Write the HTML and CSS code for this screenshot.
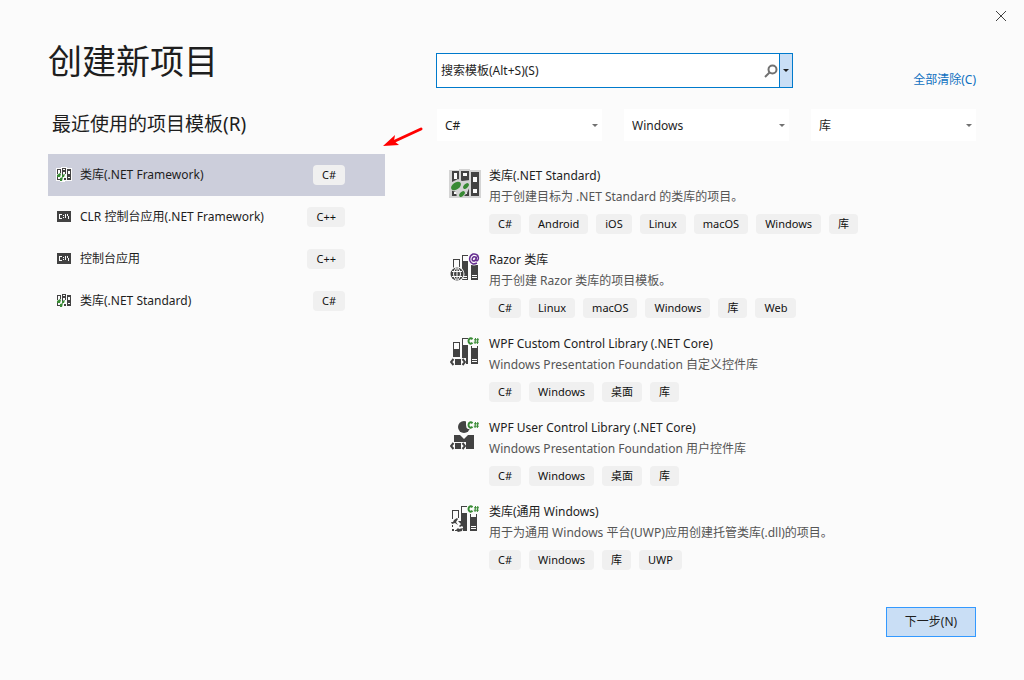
FILE: index.html
```html
<!DOCTYPE html>
<html lang="zh-CN">
<head>
<meta charset="utf-8">
<meta name="viewport" content="width=device-width, initial-scale=1">
<title>创建新项目</title>
<link rel="stylesheet" href="styles.css">
</head>
<body>
<svg class="sprites" aria-hidden="true">
  <symbol id="lib-small" viewBox="0 0 16 16">
    <path class="halo" d="M0 1h5V0h6v1h5v13H9v1H4v-1H0z"/>
    <path class="ink" d="M1 2h4v4H4V3H2v4H1zM1 10h1v2h2v1H1zM6 1h4v6H9V5H7v3H6zM11 2h4v11h-4zM8 11h2v2H8z"/>
    <path class="halo" d="M7 2h2v1H7zM12 4h2v3h-2zM12 10h2v1h-2z"/>
    <path class="green" d="M1 8l3-2 1 1-1 3H1zM6 8l3-1-1 3H6zM4 11l3-1-1 4H4z"/>
  </symbol>
  <symbol id="console" viewBox="0 0 16 16">
    <path class="ink" d="M1 2h14v11H1z"/>
    <path class="halo" d="M3 5h3v1H4v3h2v1H3zM7 6h1v1H7zM7 8h1v1H7zM9 5h1v4H9zM11 5h1v2h-1zM12 7h1v3h-1z"/>
  </symbol>
  <symbol id="lib" viewBox="0 1 32 32">
    <path class="rim" d="M0 2h10V1h11v1h11v28H0z"/>
    <path class="ink" d="M3 3h7v25H3zM12 3h8v25h-8zM22 4h8v24h-8z"/>
    <path class="halo" d="M5 5h3v6H5zM14 5h4v3h-4zM24 9h4v5h-4zM24 21h4v4h-4zM5 24h3v2H5zM15 24h3v2h-3z"/>
    <path class="rim" d="M1 15l8-4 4 2 8-1v6l-3 7-4 4-6 1-1-6-6-2z"/>
    <ellipse class="green" cx="7" cy="18" rx="5.500" ry="3.500" transform="rotate(-35 7 18)"/>
    <ellipse class="green" cx="17" cy="18" rx="3.500" ry="2" transform="rotate(-45 17 18)"/>
    <ellipse class="green" cx="13" cy="26" rx="3.500" ry="2" transform="rotate(-45 13 26)"/>
  </symbol>
  <symbol id="csharp" viewBox="0 0 12 8">
    <path class="line-green" d="M5.500 2.200C4 .7 1.500 1.200 1.500 4s2.500 3.300 4 1.800"/>
    <path class="hash" d="M8.500 1L8 7M10.800 1L10.300 7M7 2.800h5M6.800 5.200h5"/>
  </symbol>
  <symbol id="markup" viewBox="0 0 16 8">
    <path class="halo" d="M0 0h16v8H0z"/>
    <path class="line-ink" d="M3.500 1L1 4l2.500 3M12.500 1L15 4l-2.500 3"/>
    <path class="ink" d="M5 1h6v6H5z"/>
  </symbol>
  <symbol id="razor" viewBox="0 0 32 32">
    <path class="ink" fill-rule="evenodd" d="M4 6h7v9H4zM5 7v7h5V7zM13 2h6v1h-5v5h5v19h-6zM22 12h7v15h-7zM14 23h4v1h-4zM14 25h4v1h-4zM23 22h5v1h-5zM23 25h5v-1h-5z"/>
    <circle class="halo" cx="8" cy="21" r="7.500"/>
    <circle class="ink" cx="8" cy="21" r="6.500"/>
    <path class="line-light" d="M3 18.500h10M3 23.500h10M8 15v12M7 15q-5 6 0 12M9 15q5 6 0 12"/>
    <circle class="halo" cx="25" cy="6" r="6.500"/>
    <path class="line-purple" d="M28 10Q23 12.500 21 8Q19.500 3 24 1Q29 .5 29.500 5Q29 8.500 27 7.500L27.500 3.500M27 5.500Q26.500 8 24.500 8Q22.500 7.500 23.500 5Q25 3 27 4.500"/>
  </symbol>
  <symbol id="wpf-custom" viewBox="0 0 32 32">
    <path class="ink" fill-rule="evenodd" d="M4 5h7v15H4zM5 6v6h5V6zM13 1h6v1h-5v6h5v19h-6zM22 9h7v18h-7zM23 9h5v2h-5zM23 22h5v1h-5zM23 25h5v-1h-5z"/>
    <use href="#markup" x="1" y="21" width="16" height="8"/>
    <use href="#csharp" x="18" y="0" width="12" height="8"/>
  </symbol>
  <symbol id="wpf-user" viewBox="0 0 32 32">
    <circle class="ink" cx="15" cy="6" r="6"/>
    <path class="ink" d="M5 14h6l4 4 4-4h6v14H5z"/>
    <path class="halo" d="M17 0h13v8h-11q-2-1-2-4z"/>
    <use href="#markup" x="1" y="21" width="16" height="8"/>
    <use href="#csharp" x="18" y="0" width="12" height="8"/>
  </symbol>
  <symbol id="uwp" viewBox="0 0 32 32">
    <path class="ink" fill-rule="evenodd" d="M3 5h7v8H9V6H4v8H3zM12 1h6v1h-5v6h5v18h-4v-8h-2zM21 9h7v17h-7zM22 9h5v3h-5zM22 21h5v1h-5zM22 24h5v-1h-5z"/>
    <path class="ink" d="M5 15l3-2 1 1-2 3 2 3-3-2-3 1-1-2h2zM3 20h1v2H3zM3 24h2v2H3zM6 25h4v1H6zM9 16h3l3 3v4l-2-2-2 1-1-1 2-2zM14 23l-1 3-4 1-2-2 2-2 1 1z"/>
    <use href="#csharp" x="18" y="0" width="12" height="8"/>
  </symbol>
</svg>

<div class="dialog">
  <div class="titlebar">
    <button class="close" type="button" aria-label="关闭"><svg width="12" height="12" viewBox="0 0 12 12"><path d="M1 1l10 10M11 1L1 11"/></svg></button>
  </div>
  <main class="content">
    <section class="recent">
      <h1>创建新项目</h1>
      <h2>最近使用的项目模板(R)</h2>
      <svg class="pointer" width="40" height="21" viewBox="0 0 40 21" aria-hidden="true"><path class="pointer-line" d="M38 2L12 14"/><path class="pointer-head" d="M0 19L12 8l-1 6 5 4z"/></svg>
      <ul class="recent-list">
        <li><button class="recent-row selected" type="button"><svg class="icon-small"><use href="#lib-small"/></svg><span class="name">类库(.NET Framework)</span><span class="tag">C#</span></button></li>
        <li><button class="recent-row" type="button"><svg class="icon-small"><use href="#console"/></svg><span class="name">CLR 控制台应用(.NET Framework)</span><span class="tag">C++</span></button></li>
        <li><button class="recent-row" type="button"><svg class="icon-small"><use href="#console"/></svg><span class="name">控制台应用</span><span class="tag">C++</span></button></li>
        <li><button class="recent-row" type="button"><svg class="icon-small"><use href="#lib-small"/></svg><span class="name">类库(.NET Standard)</span><span class="tag">C#</span></button></li>
      </ul>
    </section>

    <section class="templates">
      <div class="search-row">
        <div class="search">
          <input type="text" aria-label="搜索模板" placeholder="搜索模板(Alt+S)(S)">
          <button class="search-go" type="button" aria-label="搜索"><svg width="14" height="14" viewBox="0 0 14 14"><circle cx="8.500" cy="5.500" r="4"/><path d="M5.500 8.500L1 13"/></svg></button>
          <button class="search-more" type="button" aria-label="搜索历史"><span class="caret"></span></button>
        </div>
        <a class="clear" href="#">全部清除(C)</a>
      </div>
      <div class="filters">
        <label class="filter"><select aria-label="语言"><option>C#</option></select><span class="caret"></span></label>
        <label class="filter"><select aria-label="平台"><option>Windows</option></select><span class="caret"></span></label>
        <label class="filter"><select aria-label="项目类型"><option>库</option></select><span class="caret"></span></label>
      </div>
      <ul class="template-list">
        <li><button class="template" type="button"><svg class="icon"><use href="#lib"/></svg><span class="info"><span class="name">类库(.NET Standard)</span><span class="desc">用于创建目标为 .NET Standard 的类库的项目。</span><span class="tags"><span class="tag">C#</span><span class="tag">Android</span><span class="tag">iOS</span><span class="tag">Linux</span><span class="tag">macOS</span><span class="tag">Windows</span><span class="tag">库</span></span></span></button></li>
        <li><button class="template" type="button"><svg class="icon"><use href="#razor"/></svg><span class="info"><span class="name">Razor 类库</span><span class="desc">用于创建 Razor 类库的项目模板。</span><span class="tags"><span class="tag">C#</span><span class="tag">Linux</span><span class="tag">macOS</span><span class="tag">Windows</span><span class="tag">库</span><span class="tag">Web</span></span></span></button></li>
        <li><button class="template" type="button"><svg class="icon"><use href="#wpf-custom"/></svg><span class="info"><span class="name">WPF Custom Control Library (.NET Core)</span><span class="desc">Windows Presentation Foundation 自定义控件库</span><span class="tags"><span class="tag">C#</span><span class="tag">Windows</span><span class="tag">桌面</span><span class="tag">库</span></span></span></button></li>
        <li><button class="template" type="button"><svg class="icon"><use href="#wpf-user"/></svg><span class="info"><span class="name">WPF User Control Library (.NET Core)</span><span class="desc">Windows Presentation Foundation 用户控件库</span><span class="tags"><span class="tag">C#</span><span class="tag">Windows</span><span class="tag">桌面</span><span class="tag">库</span></span></span></button></li>
        <li><button class="template" type="button"><svg class="icon"><use href="#uwp"/></svg><span class="info"><span class="name">类库(通用 Windows)</span><span class="desc">用于为通用 Windows 平台(UWP)应用创建托管类库(.dll)的项目。</span><span class="tags"><span class="tag">C#</span><span class="tag">Windows</span><span class="tag">库</span><span class="tag">UWP</span></span></span></button></li>
      </ul>
    </section>
  </main>
  <footer class="actions"><button class="next" type="button">下一步(N)</button></footer>
</div>
</body>
</html>
```
FILE: styles.css
```css
* { box-sizing: border-box; }

body {
  margin: 0;
  background: #fbfbfb;
  color: #1e1e1e;
  font: 12px/20px "Noto Sans", "Noto Sans CJK SC", sans-serif;
}

button, input, select { font: inherit; color: inherit; margin: 0; border: 0; padding: 0; background: none; border-radius: 0; }
button { text-align: left; cursor: pointer; }
ul { list-style: none; margin: 0; padding: 0; }
h1, h2 { margin: 0; font-weight: 400; }

.sprites { position: absolute; width: 0; height: 0; }
.ink { fill: #424242; }
.halo { fill: #fbfbfb; }
.rim { fill: #d4d4d4; }
.green { fill: #388a34; }
.line-light, .line-ink, .line-green, .line-purple, .hash { fill: none; }
.line-light { stroke: #fbfbfb; }
.line-ink { stroke: #424242; stroke-width: 2; }
.line-green { stroke: #388a34; stroke-width: 2; }
.hash { stroke: #388a34; }
.line-purple { stroke: #652d90; stroke-width: 1.5; }

.dialog { min-height: 100vh; display: flex; flex-direction: column; }
.titlebar { display: flex; justify-content: flex-end; padding: 8px 15px 0; }
.close { display: flex; padding: 2px; }
.close svg { fill: none; stroke: #424242; }

.content {
  flex: 1;
  display: grid;
  grid-template-columns: 337fr 540fr;
  gap: 51px;
  padding: 0 48px;
}

.recent { position: relative; padding-top: 13px; }
h1 { font-size: 34px; line-height: 48px; }
h2 { font-size: 19px; line-height: 28px; padding: 25px 0 16px 4px; }
.recent-row { display: flex; align-items: center; gap: 8px; width: 100%; height: 42px; padding: 0 40px 0 8px; }
.recent-row .name { flex: 1; }
.selected { background: #cccedb; }
.icon-small { width: 16px; height: 16px; }
.pointer { position: absolute; right: -38px; top: 103px; }
.pointer-line { stroke: #f00; stroke-width: 3; stroke-linecap: round; }
.pointer-head { fill: #f00; }

.tag { padding: 0 9px; border-radius: 4px; background: #f0f0f0; font-size: 11px; line-height: 20px; color: #111; }

.templates { padding-top: 29px; }
.search-row { display: flex; justify-content: space-between; }
.search { display: flex; flex: 0 1 357px; height: 35px; border: 1px solid #007acc; background: #fff; }
.search input { flex: 1; min-width: 0; padding: 0 4px; outline: 0; }
.search input::placeholder { color: #1e1e1e; opacity: 1; }
.search-go { display: flex; align-items: center; padding-right: 1px; }
.search-go svg { fill: none; stroke: #717171; stroke-width: 2; }
.search-more { width: 13px; display: flex; align-items: center; justify-content: center; border-left: 1px solid #007acc; background: #c9def5; }
.caret { border: 3px solid transparent; border-top-color: currentColor; border-bottom: 0; }
.clear { align-self: flex-end; color: #0e70c0; text-decoration: none; line-height: 16px; }

.filters { display: grid; grid-template-columns: repeat(3, 1fr); gap: 22px; padding: 21px 0 24px 1px; }
.filter { display: flex; align-items: center; background: #fff; height: 32px; padding-right: 4px; }
.filter select { appearance: none; flex: 1; min-width: 0; height: 32px; padding: 2px 0 0 8px; }
.filter .caret { color: #717171; }

.template { display: flex; gap: 8px; width: 100%; padding: 0 0 15px 13px; }
.icon { flex: none; width: 32px; height: 32px; margin-top: 4px; }
.info { display: flex; flex-direction: column; line-height: 21px; }
.desc { color: #555; }
.tags { display: flex; flex-wrap: wrap; gap: 8px; padding-top: 7px; }

.actions { display: flex; justify-content: flex-end; padding: 0 48px 43px; }
.next { min-width: 90px; height: 30px; border: 1px solid #3399ff; background: #c9def5; text-align: center; }
```
